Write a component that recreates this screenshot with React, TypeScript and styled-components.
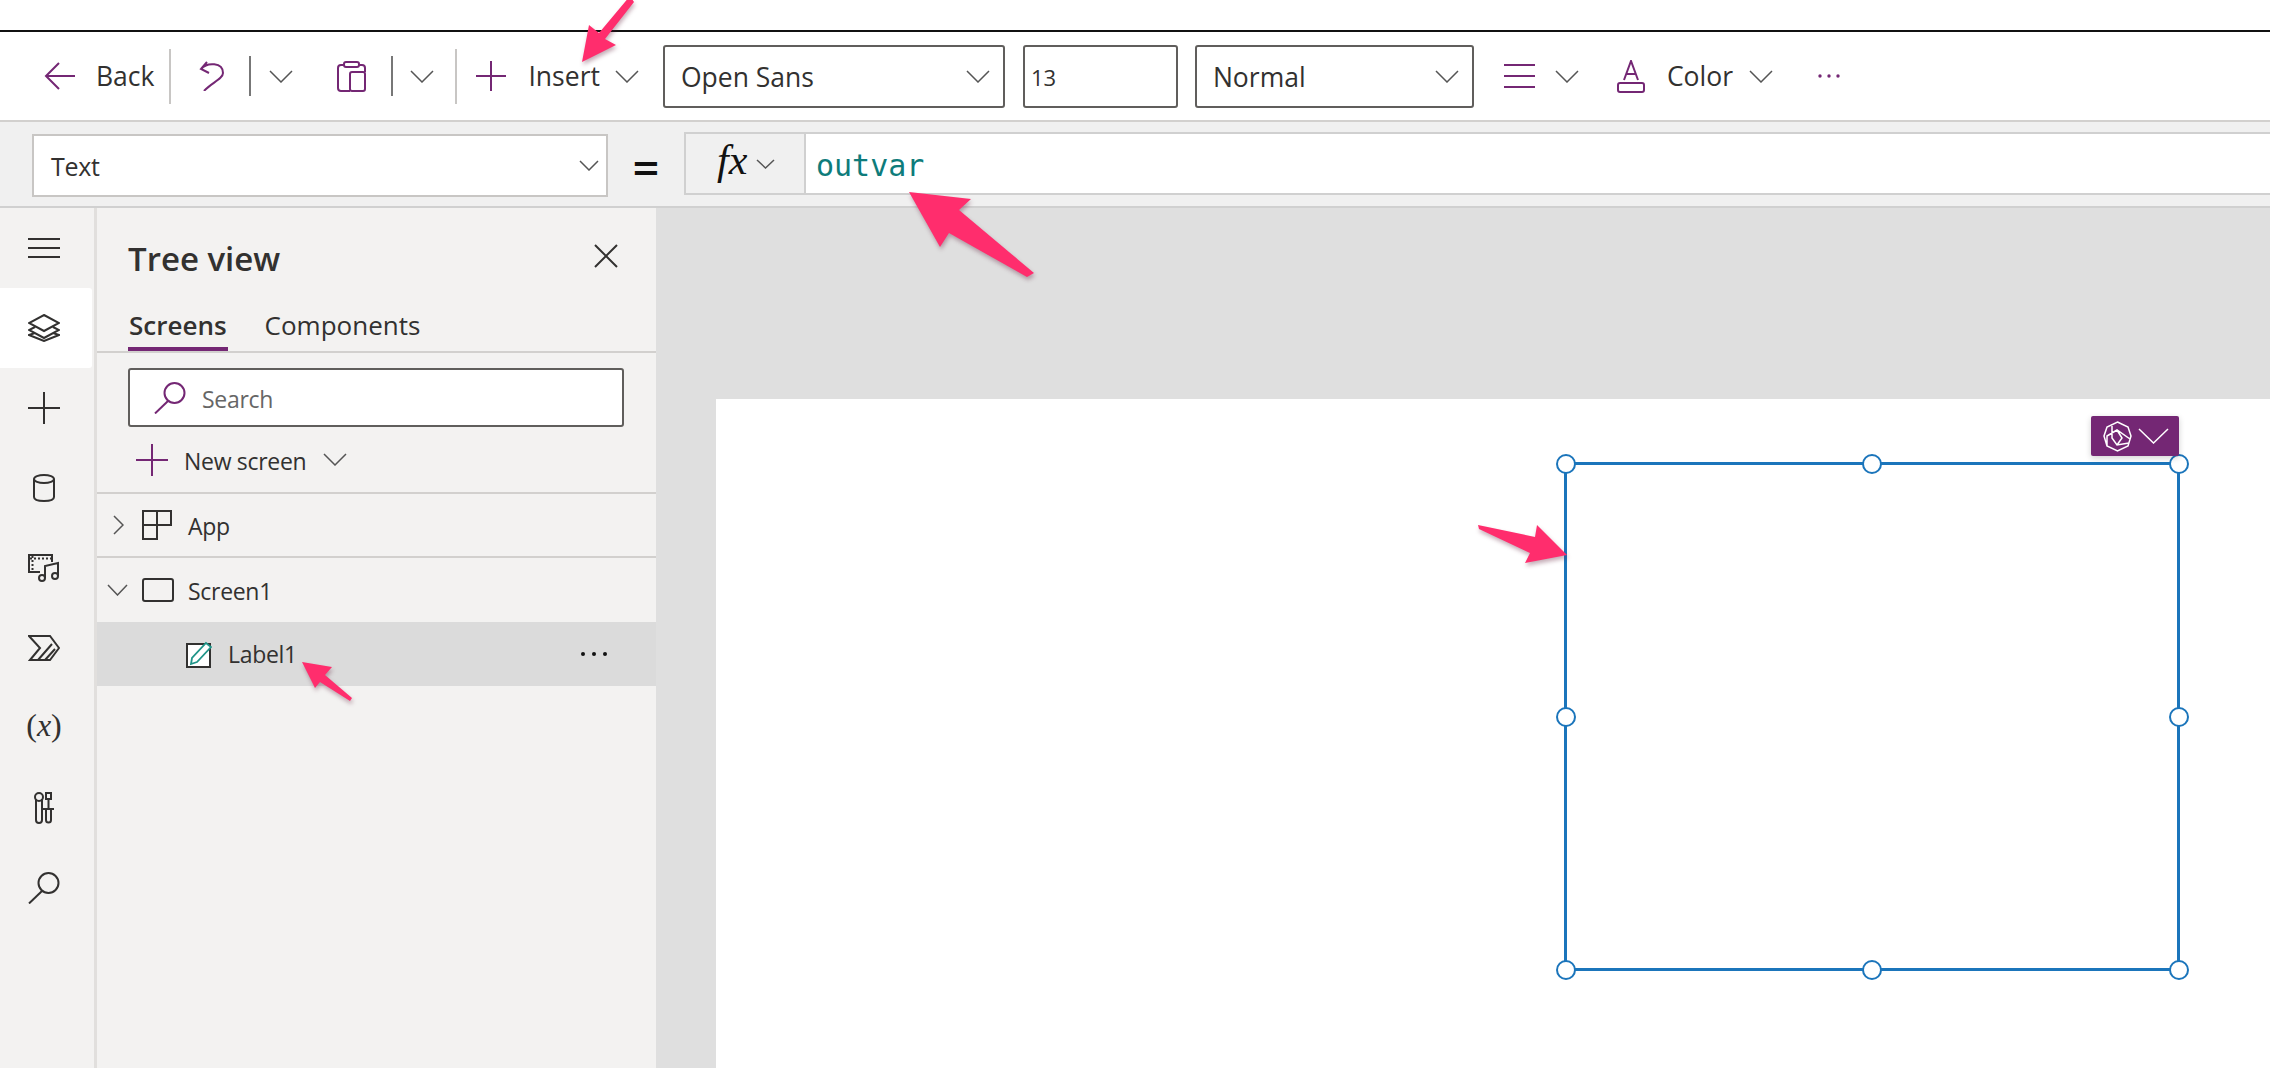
import styled, { createGlobalStyle } from "styled-components";

const purple = "#742774";
const ink = "#323130";
const blue = "#1b75bb";

const GlobalStyle = createGlobalStyle`
  html, body {
    margin: 0;
    padding: 0;
    background: #fff;
  }
  * {
    box-sizing: border-box;
  }
`;

const Page = styled.div`
  position: relative;
  width: 2270px;
  height: 1068px;
  overflow: hidden;
  display: flex;
  flex-direction: column;
  font-family: "Open Sans", "Noto Sans", sans-serif;
  color: ${ink};
`;
const TopStrip = styled.div`
  height: 32px;
  flex: none;
  background: #fff;
  border-bottom: 2px solid #111;
`;
const Toolbar = styled.div`
  height: 90px;
  flex: none;
  display: flex;
  align-items: center;
  padding-left: 44px;
  background: #fff;
  border-bottom: 2px solid #d2d0ce;
`;
const Slot = styled.span<{ $left?: number }>`
  display: flex;
  align-items: center;
  flex: none;
  margin-left: ${(p) => p.$left ?? 0}px;
`;
const Label = styled(Slot)`
  font-size: 26.5px;
  line-height: 34px;
  color: ${ink};
`;
const RowText = styled(Slot)`
  padding-top: 2px;
`;
const Sep = styled.span<{ $left: number; $tall?: boolean }>`
  width: 2px;
  flex: none;
  height: ${(p) => (p.$tall ? 55 : 40)}px;
  margin-left: ${(p) => p.$left}px;
  background: ${(p) => (p.$tall ? "#c8c6c4" : "#777")};
`;
const Select = styled.div<{ $w: number; $left: number }>`
  width: ${(p) => p.$w}px;
  height: 63px;
  flex: none;
  margin-left: ${(p) => p.$left}px;
  display: flex;
  align-items: center;
  justify-content: space-between;
  padding: 1px 13px 0 16px;
  background: #fff;
  border: 2px solid #605e5c;
  border-radius: 3px;
  font-size: 26.5px;
  color: ${ink};
`;
const NumberBox = styled(Select)`
  padding-left: 6px;
  font-size: 22px;
`;
const FormulaBar = styled.div`
  height: 86px;
  flex: none;
  display: flex;
  align-items: flex-start;
  padding: 10px 0 0 32px;
  background: #f0f0f0;
  border-bottom: 2px solid #d0d0d0;
`;
const PropertySelect = styled.div`
  width: 576px;
  height: 63px;
  margin-top: 2px;
  flex: none;
  display: flex;
  align-items: center;
  justify-content: space-between;
  padding: 0 7px 0 17px;
  background: #fff;
  border: 2px solid #c8c6c4;
  font-size: 25px;
  letter-spacing: -0.3px;
`;
const EqualSign = styled.span`
  width: 76px;
  height: 65px;
  flex: none;
  display: flex;
  align-items: center;
  justify-content: center;
  padding-top: 4px;
  font-size: 47px;
  font-weight: 600;
  color: #111;
`;
const FxBox = styled.div`
  width: 122px;
  height: 63px;
  flex: none;
  display: flex;
  align-items: center;
  padding-left: 31px;
  gap: 9px;
  background: #f0f0f0;
  border: 2px solid #d0d0d0;
`;
const FxText = styled.span`
  margin-top: -8px;
  font-family: "Liberation Serif", serif;
  font-style: italic;
  font-size: 42px;
  line-height: 44px;
  color: #111;
`;
const Editor = styled.div`
  flex: 1;
  height: 63px;
  display: flex;
  align-items: center;
  padding: 3px 0 0 10px;
  background: #fff;
  border-top: 2px solid #d0d0d0;
  border-bottom: 2px solid #d0d0d0;
  font-family: "DejaVu Sans Mono", monospace;
  font-size: 30px;
  color: #0e7c7b;
`;
const Main = styled.div`
  flex: 1;
  display: flex;
  min-height: 0;
`;
const Rail = styled.nav`
  width: 97px;
  flex: none;
  background: #f3f2f1;
  border-right: 3px solid #e1dfdd;
`;
const RailItem = styled.div<{ $active?: boolean }>`
  width: 92px;
  height: 80px;
  display: flex;
  align-items: center;
  justify-content: center;
  padding-right: 4px;
  background: ${(p) => (p.$active ? "#fff" : "transparent")};
  border-radius: 0 3px 3px 0;
`;
const VarGlyph = styled.span`
  margin-top: -5px;
  font-family: "Liberation Serif", serif;
  font-size: 32px;
  color: ${ink};
`;
const Panel = styled.aside`
  width: 559px;
  flex: none;
  display: flex;
  flex-direction: column;
  background: #f3f2f1;
`;
const TitleRow = styled.div`
  height: 100px;
  flex: none;
  display: flex;
  align-items: center;
  justify-content: space-between;
  padding: 0 38px 0 31px;
`;
const Title = styled.h2`
  margin: 0;
  font-size: 33px;
  font-weight: 600;
`;
const CloseIcon = styled.span`
  margin-bottom: 4px;
`;
const Tabs = styled.div`
  height: 45px;
  flex: none;
  display: flex;
  gap: 36px;
  padding-left: 31px;
  border-bottom: 2px solid #d2d0ce;
`;
const Tab = styled.div<{ $active?: boolean }>`
  height: 43px;
  padding: 0 1px;
  font-size: 26px;
  line-height: 34px;
  font-weight: ${(p) => (p.$active ? 600 : 400)};
  border-bottom: 4px solid ${(p) => (p.$active ? purple : "transparent")};
`;
const SearchBox = styled.div`
  width: 496px;
  height: 59px;
  flex: none;
  margin: 15px 0 0 31px;
  display: flex;
  align-items: center;
  gap: 16px;
  padding-left: 24px;
  background: #fff;
  border: 2px solid #605e5c;
  border-radius: 3px;
  font-size: 23px;
  letter-spacing: -0.3px;
  color: #666;
`;
const NewScreen = styled.div`
  height: 67px;
  flex: none;
  display: flex;
  align-items: center;
  padding-left: 39px;
  font-size: 23px;
  letter-spacing: -0.3px;
  border-bottom: 2px solid #d2d0ce;
`;
const TreeRow = styled.div<{ $h: number; $selected?: boolean; $line?: boolean }>`
  height: ${(p) => p.$h}px;
  flex: none;
  display: flex;
  align-items: center;
  font-size: 23px;
  letter-spacing: -0.3px;
  background: ${(p) => (p.$selected ? "#dbdbdb" : "transparent")};
  border-bottom: ${(p) => (p.$line ? "2px solid #d2d0ce" : "none")};
`;
const Canvas = styled.main`
  flex: 1;
  display: flex;
  padding: 191px 0 0 60px;
  background: #dfdfdf;
`;
const Artboard = styled.div`
  position: relative;
  flex: 1;
  background: #fff;
`;
const Selection = styled.div`
  position: absolute;
  left: 848px;
  top: 63px;
  width: 616px;
  height: 509px;
  border: 3px solid ${blue};
`;
// % resolves against the padding box, so nudge out onto the middle of the border
const Handle = styled.span<{ $x: number; $y: number }>`
  position: absolute;
  left: calc(${(p) => p.$x}% + ${(p) => (p.$x - 50) * 0.03}px);
  top: calc(${(p) => p.$y}% + ${(p) => (p.$y - 50) * 0.03}px);
  width: 20px;
  height: 20px;
  transform: translate(-50%, -50%);
  background: #fff;
  border: 2.5px solid ${blue};
  border-radius: 50%;
`;
const CopilotBadge = styled.div`
  position: absolute;
  left: 1375px;
  top: 17px;
  width: 88px;
  height: 40px;
  display: flex;
  align-items: center;
  gap: 6px;
  padding-left: 12px;
  background: ${purple};
  border-radius: 2px;
  box-shadow: 0 2px 6px rgba(0, 0, 0, 0.18);
`;
const ArrowLayer = styled.svg`
  position: absolute;
  left: 0;
  top: 0;
  width: 2270px;
  height: 1068px;
  pointer-events: none;
  filter: drop-shadow(1px 3px 2px rgba(90, 20, 50, 0.35));
`;
const Line = styled.svg<{ $c?: string; $w?: number }>`
  display: block;
  flex: none;
  fill: none;
  stroke: ${(p) => p.$c ?? ink};
  stroke-width: ${(p) => p.$w ?? 2}px;
`;

function Chevron({ w = 24, h = 13, c = "#555", left = 0 }: { w?: number; h?: number; c?: string; left?: number }) {
  return (
    <Slot $left={left}>
      <Line $c={c} $w={1.5} width={w} height={h} viewBox={`0 0 ${w} ${h}`}>
        <polyline points={`1,1 ${w / 2},${h - 1} ${w - 1},1`} />
      </Line>
    </Slot>
  );
}

function Plus({ size = 30, c = purple }: { size?: number; c?: string }) {
  const m = size / 2;
  return (
    <Line $c={c} width={size} height={size} viewBox={`0 0 ${size} ${size}`}>
      <path d={`M0 ${m}H${size}M${m} 0V${size}`} />
    </Line>
  );
}

function SearchGlyph({ c = ink }: { c?: string }) {
  return (
    <Line $c={c} width="32" height="32" viewBox="0 0 32 32">
      <circle cx="20.5" cy="11" r="10" />
      <path d="M14 19L1 31.5" />
    </Line>
  );
}

const Arrows = () => (
  <ArrowLayer viewBox="0 0 2270 1068">
    <g fill="#ff2d6d">
      <polygon points="582,62 589,25 599,33 630,-4 634,2 605,39 616,45" />
      <polygon points="909,192 971,199 959,210 1034,273 1027,277 949,233 940,247" />
      <polygon points="302,662 332,667 325,675 352,698 350,701 320,682 315,688" />
      <polygon points="1567,555 1537,525 1535,537 1478,525 1479,529 1530,553 1525,563" />
    </g>
  </ArrowLayer>
);

export default function App() {
  return (
    <Page>
      <GlobalStyle />
      <TopStrip />
      <Toolbar>
        <Line $c={purple} width="31" height="28" viewBox="0 0 31 28">
          <path d="M31 14H2M15 1L2 14L15 27" />
        </Line>
        <Label $left={21}>Back</Label>
        <Sep $left={15} $tall />
        <Slot $left={28}>
          <Line $c={purple} width="25" height="30" viewBox="0 0 25 30">
            <path d="M8 1L2 8L10 12M2 8C8 1 24 1 24 12C24 18 12 22 5 30" />
          </Line>
        </Slot>
        <Sep $left={25} />
        <Chevron left={18} />
        <Slot $left={44}>
          <Line $c={purple} width="29" height="31" viewBox="0 0 29 31">
            <rect x="7" y="1" width="15" height="5" rx="2" />
            <path d="M7 4H4a3 3 0 0 0-3 3V27a3 3 0 0 0 3 3H13M22 4H25a3 3 0 0 1 3 3V11" />
            <rect x="13" y="11" width="15" height="19" rx="2" />
          </Line>
        </Slot>
        <Sep $left={25} />
        <Chevron left={17} />
        <Sep $left={21} $tall />
        <Slot $left={19}>
          <Plus />
        </Slot>
        <Label $left={22}>Insert</Label>
        <Chevron left={15} />
        <Select $w={342} $left={24}>
          Open Sans
          <Chevron />
        </Select>
        <NumberBox $w={155} $left={18}>13</NumberBox>
        <Select $w={279} $left={17}>
          Normal
          <Chevron />
        </Select>
        <Slot $left={30}>
          <Line $c={purple} width="31" height="24" viewBox="0 0 31 24">
            <path d="M0 1H31M0 12H31M0 23H31" />
          </Line>
        </Slot>
        <Chevron left={20} />
        <Slot $left={38}>
          <Line $c={purple} width="28" height="33" viewBox="0 0 28 33">
            <path d="M7 20L14 1L21 20M9 14H19" />
            <rect x="1" y="23" width="26" height="9" rx="2" />
          </Line>
        </Slot>
        <Label $left={22}>Color</Label>
        <Chevron left={16} />
        <Slot $left={45}>
          <svg width="22" height="4" viewBox="0 0 22 4">
            <g fill={purple}>
              <circle cx="2" cy="2" r="1.7" />
              <circle cx="11" cy="2" r="1.7" />
              <circle cx="20" cy="2" r="1.7" />
            </g>
          </svg>
        </Slot>
      </Toolbar>
      <FormulaBar>
        <PropertySelect>
          Text
          <Chevron w={20} h={11} />
        </PropertySelect>
        <EqualSign>=</EqualSign>
        <FxBox>
          <FxText>fx</FxText>
          <Chevron w={19} h={10} />
        </FxBox>
        <Editor>outvar</Editor>
      </FormulaBar>
      <Main>
        <Rail>
          <RailItem>
            <Line width="32" height="20" viewBox="0 0 32 20">
              <path d="M0 1H32M0 10H32M0 19H32" />
            </Line>
          </RailItem>
          <RailItem $active>
            <Line width="32" height="28" viewBox="0 0 32 28">
              <path d="M16 1L31 9L16 17L1 9ZM7 13L1 16L16 24L31 16L25 13M7 19L1 21L16 27L31 21L25 19" />
            </Line>
          </RailItem>
          <RailItem>
            <Plus size={32} c={ink} />
          </RailItem>
          <RailItem>
            <Line width="22" height="28" viewBox="0 0 22 28">
              <path d="M1 5V23C1 26 6 27 11 27S21 26 21 23V5" />
              <ellipse cx="11" cy="5" rx="10" ry="4" />
            </Line>
          </RailItem>
          <RailItem>
            <Line width="32" height="28" viewBox="0 0 32 28">
              <path d="M12 18H1V1H24V8" />
              <path d="M4.500 2V17M2 4.500H24" strokeDasharray="2 2" />
              <path d="M17 24V12L30 9V22" />
              <circle cx="14" cy="24" r="3" />
              <circle cx="27" cy="22" r="3" />
            </Line>
          </RailItem>
          <RailItem>
            <Line width="32" height="26" viewBox="0 0 32 26">
              <path d="M1 1H22L31 13L22 25H2L12 13ZM10 25L24 9M17 25L27 14" />
            </Line>
          </RailItem>
          <RailItem>
            <VarGlyph>
              (<i>x</i>)
            </VarGlyph>
          </RailItem>
          <RailItem>
            <Line width="20" height="32" viewBox="0 0 20 32">
              <circle cx="5" cy="5" r="4" />
              <path d="M2 7V28a3 3 0 0 0 6 0V7" />
              <rect x="12" y="1" width="5" height="6" />
              <path d="M14.500 7V17M9 17H20M12 17V28a2.500 2.500 0 0 0 5 0V17" />
            </Line>
          </RailItem>
          <RailItem>
            <SearchGlyph />
          </RailItem>
        </Rail>
        <Panel>
          <TitleRow>
            <Title>Tree view</Title>
            <CloseIcon>
              <Line width="24" height="24" viewBox="0 0 24 24">
                <path d="M1 1L23 23M23 1L1 23" />
              </Line>
            </CloseIcon>
          </TitleRow>
          <Tabs>
            <Tab $active>Screens</Tab>
            <Tab>Components</Tab>
          </Tabs>
          <SearchBox>
            <SearchGlyph c={purple} />
            <RowText>Search</RowText>
          </SearchBox>
          <NewScreen>
            <Plus size={32} />
            <RowText $left={16}>New screen</RowText>
            <Chevron left={17} />
          </NewScreen>
          <TreeRow $h={64} $line>
            <Slot $left={16}>
              <Line $c="#555" $w={1.5} width="11" height="20" viewBox="0 0 11 20">
                <polyline points="1,1 10,10 1,19" />
              </Line>
            </Slot>
            <Slot $left={18}>
              <Line width="30" height="30" viewBox="0 0 30 30">
                <path d="M1 1H29V15H15V29H1ZM15 1V15M1 15H15" />
              </Line>
            </Slot>
            <RowText $left={16}>App</RowText>
          </TreeRow>
          <TreeRow $h={64}>
            <Chevron left={10} w={21} h={12} />
            <Slot $left={14}>
              <Line width="32" height="24" viewBox="0 0 32 24">
                <rect x="1" y="1" width="30" height="22" rx="2" />
              </Line>
            </Slot>
            <RowText $left={14}>Screen1</RowText>
          </TreeRow>
          <TreeRow $h={64} $selected>
            <Slot $left={89}>
              <svg width="26" height="27" viewBox="0 0 26 27">
                <rect x="1" y="3" width="23" height="23" fill="#fff" stroke={ink} strokeWidth="2" />
                <path d="M5 23L6 17L20 2L25 6L11 21Z" fill="#fff" stroke="#1f9488" strokeWidth="1.800" />
              </svg>
            </Slot>
            <Slot $left={16}>Label1</Slot>
            <Slot $left={284}>
              <svg width="26" height="4" viewBox="0 0 26 4">
                <g fill="#111">
                  <circle cx="2" cy="2" r="2" />
                  <circle cx="13" cy="2" r="2" />
                  <circle cx="24" cy="2" r="2" />
                </g>
              </svg>
            </Slot>
          </TreeRow>
        </Panel>
        <Canvas>
          <Artboard>
            <Selection>
              <Handle $x={0} $y={0} />
              <Handle $x={50} $y={0} />
              <Handle $x={100} $y={0} />
              <Handle $x={0} $y={50} />
              <Handle $x={100} $y={50} />
              <Handle $x={0} $y={100} />
              <Handle $x={50} $y={100} />
              <Handle $x={100} $y={100} />
            </Selection>
            <CopilotBadge>
              <Line $c="#fff" $w={1.5} width="29" height="31" viewBox="0 0 29 31">
                <path d="M14.500 1L25 6L28 15L25 25L14.500 30L4 25L1 15L4 6ZM9 3V17L14 24L26 22M4 25V15L14 9L27 18M14 9L19 17L14 24" />
              </Line>
              <Chevron w={31} h={16} c="#fff" />
            </CopilotBadge>
          </Artboard>
        </Canvas>
      </Main>
      <Arrows />
    </Page>
  );
}
